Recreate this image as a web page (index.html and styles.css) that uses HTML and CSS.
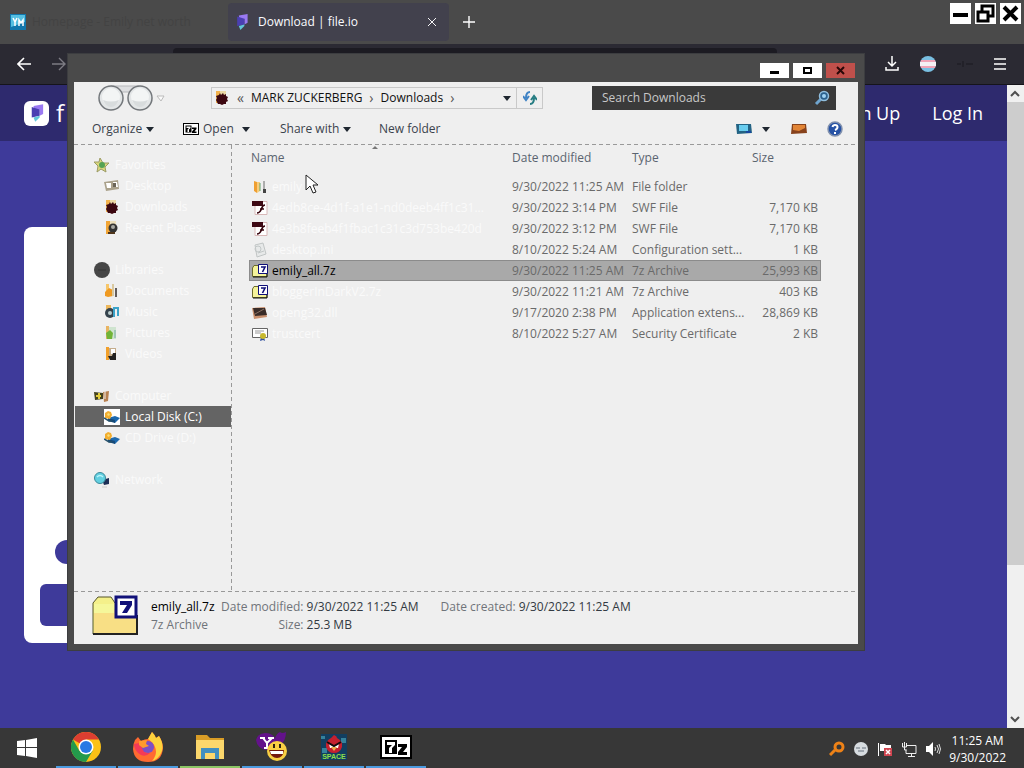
FILE: index.html
```html
<!DOCTYPE html>
<html lang="en">

<head>
  <meta charset="UTF-8">
  <meta name="viewport" content="width=device-width, initial-scale=1.0">
  <link rel="stylesheet" href="styles.css">
  <title>Download | file.io</title>
</head>

<body>
  <!-- shared icons -->
  <svg class="sprite" aria-hidden="true">
    <symbol id="caret" viewBox="0 0 8 5"><path d="M0 0h8L4 5z" fill="#1f2730"/></symbol>
    <symbol id="sevenzip" viewBox="0 0 32 24">
      <path d="M0 0h32v24H0z" fill="#000"/><path d="M2 2h28v20H2z" fill="#fff"/><path d="M5 5h12v14H5z" fill="#000"/>
      <path d="M7 7h8v3l-3 3v5H9v-5l3-3H7z" fill="#fff"/><path d="M18 9h9v3l-4 5h4v3h-9v-3l4-5h-4z" fill="#000"/>
    </symbol>
    <symbol id="archive" viewBox="0 0 46 42">
      <path d="M1 8l5-6h13l4 6h21v31H1z" fill="#f4f08a" stroke="#55552a"/>
      <path d="M2 14h42v24H2z" fill="#f8df85"/><path d="M2 9h20v9H2z" fill="#f5f79a"/>
      <path d="M1 39h44V20" fill="none" stroke="#222" stroke-width="2"/>
      <path d="M24 2h20v20H24z" fill="#fff" stroke="#101078" stroke-width="3"/>
      <path d="M28 6h12v4l-5 8h-5l5-8h-7z" fill="#101078"/>
    </symbol>
    <symbol id="archive-small" viewBox="0 0 16 16">
      <path d="M0.500 5L2 2.500h4L7.500 5H15v8.500H.5z" fill="#f5f39a" stroke="#6c6c2c"/>
      <path d="M1 14h14V9" fill="none" stroke="#111"/>
      <path d="M6.500 1.500h9v9h-9z" fill="#fff" stroke="#101078"/>
      <path d="M9 4h4L10.500 9" fill="none" stroke="#101078" stroke-width="1.6"/>
    </symbol>
    <symbol id="swf" viewBox="0 0 16 16">
      <path d="M3 1.500h12v13H3z" fill="#fff" stroke="#d8b8b8"/><path d="M0 1h11v5H0z" fill="#3d0914"/>
      <path d="M13 5C10 5 10 8 9 10s-2 3-4 3M8 9h4" fill="none" stroke="#35040d" stroke-width="1.6"/>
    </symbol>
    <symbol id="spider" viewBox="0 0 16 16">
      <path d="M2 1h4v12H2z" fill="#f3b34d"/><path d="M6 1h6v8H6z" fill="#ecd9a5"/>
      <path d="M5 5l1-2 1 2 2-2 1 2 2-1v2l2 1-1 2 1 2-2 1v2l-2 0-2 1-2-1-2 0-1-2-1-2 1-2-1-2z" fill="#3c0710"/>
    </symbol>
    <symbol id="disk" viewBox="0 0 16 16">
      <path d="M4 9l7-2 5 2-5 5z" fill="#1c68ad"/><path d="M4 9l7 2v3l-7-2z" fill="#164a79"/>
      <path d="M1 4l3-2 3 1 1 3-2 4-5-1z" fill="#f2ad2f"/><path d="M3 5l2-1 1 2-2 1z" fill="#fbdf75"/>
      <path d="M0 9l5 3h3" fill="none" stroke="#26506a" stroke-width="1.5"/>
    </symbol>
    <symbol id="fileio" viewBox="0 0 16 20">
      <path d="M4 2l11-2v11l-4 2V6L5 8z" fill="#9a79f2"/><path d="M2 3l9 3v7l-9 2z" fill="#4a3fb2"/><path d="M4 15l7-2v2l-5 5z" fill="#62c7da"/>
    </symbol>
  </svg>

  <div class="desktop">
    <div class="browser">
      <div class="tabs">
        <div class="tab">
          <svg class="tab-icon" viewBox="0 0 16 16"><path d="M0 0h16v16H0z" fill="#1277ac"/><path d="M1 1h14v7L1 13z" fill="#55bfe1"/><path d="M3 4l2 4 2-4M5 8v4M9 12V6l2 3 2-3v6" fill="none" stroke="#fff" stroke-width="1.5"/></svg>
          <span class="tab-title">Homepage - Emily net worth</span>
        </div>
        <div class="tab tab-active">
          <svg class="tab-icon"><use href="#fileio"/></svg>
          <span class="tab-title">Download | file.io</span>
          <button class="icon-btn" aria-label="Close tab"><svg width="10" height="10" viewBox="0 0 10 10"><path d="M1 1l8 8M9 1L1 9" stroke="#f5f5f7"/></svg></button>
        </div>
        <button class="icon-btn new-tab" aria-label="New tab"><svg width="12" height="12" viewBox="0 0 12 12"><path d="M6 0v12M0 6h12" stroke="#fff" stroke-width="1.4"/></svg></button>
        <div class="win-buttons">
          <button aria-label="Minimize"><svg viewBox="0 0 21 21"><path d="M3 10h15v4H3z"/></svg></button>
          <button aria-label="Restore"><svg viewBox="0 0 21 21"><path d="M3 9h10v9H3zM7 9V3h11v10h-5" fill="none" stroke="#000" stroke-width="3"/></svg></button>
          <button aria-label="Close"><svg viewBox="0 0 21 21"><path d="M4 4l13 13M17 4L4 17" stroke="#000" stroke-width="4"/></svg></button>
        </div>
      </div>

      <div class="navbar">
        <button class="icon-btn" aria-label="Back"><svg width="14" height="14" viewBox="0 0 14 14"><path d="M14 7H1M7 1L1 7l6 6" fill="none" stroke="#fff" stroke-width="1.6"/></svg></button>
        <button class="icon-btn" aria-label="Forward"><svg width="14" height="14" viewBox="0 0 14 14"><path d="M0 7h13M7 1l6 6-6 6" fill="none" stroke="#7d7c84" stroke-width="1.4"/></svg></button>
        <div class="url-bar"></div>
        <button class="icon-btn" aria-label="Downloads"><svg width="14" height="16" viewBox="0 0 14 16"><path d="M7 0v10M3 6l4 4 4-4M1 11v3h12v-3" fill="none" stroke="#fff" stroke-width="1.5"/></svg></button>
        <button class="icon-btn" aria-label="Profile"><svg width="16" height="16" viewBox="0 0 16 16"><circle cx="8" cy="8" r="8" fill="#79bfe2"/><path d="M1 4h14l1 4-1 4H1L0 8z" fill="#f0a4b8"/><path d="M0 6h16v4H0z" fill="#f4f0f4"/></svg></button>
        <button class="icon-btn" aria-label="Extension"><svg width="16" height="8" viewBox="0 0 16 8"><path d="M0 4h4M6 1v6M9 4h7" stroke="#222129" stroke-width="2"/></svg></button>
        <button class="icon-btn" aria-label="Menu"><svg width="12" height="12" viewBox="0 0 12 12"><path d="M0 1h12M0 6h12M0 11h12" stroke="#fff" stroke-width="1.4"/></svg></button>
      </div>

      <div class="viewport">
        <div class="site">
          <div class="site-header">
            <a href="#" class="brand"><span class="brand-logo"><svg width="14" height="18"><use href="#fileio"/></svg></span>f</a>
            <a href="#" class="site-link">Sign Up</a>
            <a href="#" class="site-link">Log In</a>
          </div>
          <div class="card">
            <span class="card-dot"></span>
            <span class="card-bar"></span>
          </div>
        </div>
        <div class="scrollbar">
          <svg viewBox="0 0 17 17"><path d="M4 11l4-4 4 4" fill="none" stroke="#505050" stroke-width="2"/></svg>
          <div class="thumb"></div>
          <svg viewBox="0 0 17 17"><path d="M4 6l4 4 4-4" fill="none" stroke="#505050" stroke-width="2"/></svg>
        </div>
      </div>
    </div>

    <div class="explorer">
      <div class="titlebar">
        <button aria-label="Minimize"><svg viewBox="0 0 29 15"><path d="M10 8h9v3h-9z"/></svg></button>
        <button aria-label="Maximize"><svg viewBox="0 0 29 15"><path d="M11 5h7v5h-7z" fill="none" stroke="#000" stroke-width="2"/></svg></button>
        <button class="close" aria-label="Close"><svg viewBox="0 0 29 15"><path d="M11 4l7 7M18 4l-7 7" stroke="#2a0808" stroke-width="2"/></svg></button>
      </div>
      <div class="explorer-body">
        <div class="address-row">
          <svg class="back-forward" viewBox="0 0 68 28">
            <path d="M14 2h28v6H14z" fill="#dedfe1" stroke="#b5b7ba"/>
            <circle cx="14" cy="14" r="12" fill="#e3e6e7" stroke="#73777b" stroke-width="1.5"/><circle cx="14" cy="13" r="9" fill="#f3f5f5"/>
            <path d="M6 16q8 3 16 0-3 7-8 7t-8-7" fill="#d8dcdd"/>
            <circle cx="43" cy="14" r="12" fill="#e3e6e7" stroke="#73777b" stroke-width="1.5"/><circle cx="43" cy="13" r="9" fill="#f3f5f5"/>
            <path d="M35 16q8 3 16 0-3 7-8 7t-8-7" fill="#d8dcdd"/>
            <path d="M60 12h7l-3 5z" fill="#fafafa" stroke="#bbb"/>
          </svg>
          <div class="address">
            <svg class="ico"><use href="#spider"/></svg>
            <span class="sep">«</span>
            <a href="#">MARK ZUCKERBERG</a>
            <span class="sep">›</span>
            <a href="#">Downloads</a>
            <span class="sep">›</span>
            <button class="icon-btn history" aria-label="Previous locations"><svg class="caret"><use href="#caret"/></svg></button>
            <button class="icon-btn refresh" aria-label="Refresh"><svg width="14" height="14" viewBox="0 0 14 14"><path d="M7 1Q3 1 3 7M0 5l3 4 3-4" fill="none" stroke="#3f83c5" stroke-width="2"/><path d="M7 13q4 0 4-6M8 9l3-4 3 4" fill="none" stroke="#277d83" stroke-width="2"/></svg></button>
          </div>
          <div class="search">
            <input type="text" placeholder="Search Downloads" aria-label="Search Downloads">
            <svg class="ico" viewBox="0 0 16 16"><path d="M2 14l5-5" stroke="#6fa5cf" stroke-width="3"/><circle cx="10" cy="6" r="4.500" fill="#2b618e" stroke="#91bedd" stroke-width="1.5"/><circle cx="10" cy="6" r="2" fill="#9fd3f4"/></svg>
          </div>
        </div>

        <div class="commands">
          <button class="organize">Organize <svg class="caret"><use href="#caret"/></svg></button>
          <button class="open"><svg width="16" height="12"><use href="#sevenzip"/></svg> Open <svg class="caret"><use href="#caret"/></svg></button>
          <button class="share">Share with <svg class="caret"><use href="#caret"/></svg></button>
          <button>New folder</button>
          <div class="view-tools">
            <button aria-label="Change view"><svg width="16" height="12" viewBox="0 0 16 12"><path d="M0 1h15l1 9-15 1z" fill="#236384"/><path d="M3 2h9v6H3z" fill="#69cdef"/><path d="M10 8h5v2h-5z" fill="#1747a0"/></svg></button>
            <button aria-label="More views"><svg class="caret"><use href="#caret"/></svg></button>
            <button class="preview" aria-label="Preview pane"><svg width="16" height="12" viewBox="0 0 16 12"><path d="M1 1h14l1 9-16 1z" fill="#87421c"/><path d="M2 2h12v3L8 8 2 7z" fill="#e28536"/></svg></button>
            <button aria-label="Help"><svg class="ico" viewBox="0 0 16 16"><circle cx="8" cy="8" r="7" fill="#2652a5" stroke="#8090ad" stroke-width="1.5"/><path d="M5.500 6Q6 4 8 4q2.500 0 2.500 2T8 9M8 11v2" fill="none" stroke="#fff" stroke-width="2"/></svg></button>
          </div>
        </div>

        <div class="panes">
          <div class="sidebar">
            <ul>
              <li class="group"><svg class="ico" viewBox="0 0 16 16"><path d="M6 1l3 5 6 0-4 4 1 5-5-3-4 3 1-6-4-4 5 0z" fill="#d9d77b" stroke="#9c9b65"/><circle cx="8" cy="8" r="3" fill="#55a254"/></svg><a href="#">Favorites</a></li>
              <li><svg class="ico" viewBox="0 0 16 16"><path d="M0 4l14-2 1 9-13 2z" fill="#aaa18b"/><path d="M2 5h5v5H3zM9 4h4l1 5h-4z" fill="#fff"/><path d="M9 5h3v4H9z" fill="#6b6558"/></svg><a href="#">Desktop</a></li>
              <li><svg class="ico"><use href="#spider"/></svg><a href="#">Downloads</a></li>
              <li><svg class="ico" viewBox="0 0 16 16"><path d="M2 1h4v13H2z" fill="#f1a536"/><path d="M6 1h6v6H6z" fill="#eee0bd"/><circle cx="9" cy="8" r="4.500" fill="#333"/><circle cx="9" cy="7" r="2" fill="#a8a8a2"/><path d="M4 12h7v2H4z" fill="#4f351b"/></svg><a href="#">Recent Places</a></li>
            </ul>
            <ul>
              <li class="group"><svg class="ico" viewBox="0 0 16 16"><circle cx="8" cy="8" r="8" fill="#464646"/><path d="M4 8h8" stroke="#343434"/></svg><a href="#">Libraries</a></li>
              <li><svg class="ico" viewBox="0 0 16 16"><path d="M2 1h3v7H2z" fill="#f6c66a"/><path d="M1 9l4-4 4 2 0 6-5 1-3-1z" fill="#ef9a22"/><path d="M8 1h2v12H8z" fill="#dac99f"/><path d="M12 5v9" stroke="#3f3835" stroke-width="1.6"/></svg><a href="#">Documents</a></li>
              <li><svg class="ico" viewBox="0 0 16 16"><path d="M2 1h5v8H2z" fill="#edb75c"/><circle cx="6" cy="9" r="5" fill="#35434d"/><circle cx="6" cy="9" r="2" fill="#bcc"/><path d="M10 13V4h4v8" fill="none" stroke="#3ba3c9" stroke-width="2"/></svg><a href="#">Music</a></li>
              <li><svg class="ico" viewBox="0 0 16 16"><path d="M2 1h3v13H2z" fill="#e9b463"/><path d="M5 2h7v12H5z" fill="#cfe4cf"/><path d="M2 8l4-3 3 3-1 6H3z" fill="#72b438"/><path d="M11 5v8" stroke="#77a79f"/></svg><a href="#">Pictures</a></li>
              <li><svg class="ico" viewBox="0 0 16 16"><path d="M2 1h3v13H2z" fill="#f2a02a"/><path d="M5 2h7v10H5z" fill="#c5ad8c"/><path d="M7 3h4v5H7z" fill="#fff"/><path d="M4 10h4l1-3h3v7H6z" fill="#22201f"/></svg><a href="#">Videos</a></li>
            </ul>
            <ul>
              <li class="group"><svg class="ico" viewBox="0 0 16 16"><path d="M0 4l9 1v6l-8 1z" fill="#44421e"/><path d="M2 8h5M5 5v6" stroke="#e4cd39" stroke-width="2"/><path d="M9 4l6-1-1 10-4 1z" fill="#b88151"/><path d="M11 3v8" stroke="#eee" stroke-width="1"/></svg><a href="#">Computer</a></li>
              <li class="current"><svg class="ico"><use href="#disk"/></svg><a href="#">Local Disk (C:)</a></li>
              <li><svg class="ico"><use href="#disk"/></svg><a href="#">CD Drive (D:)</a></li>
            </ul>
            <ul>
              <li class="group"><svg class="ico" viewBox="0 0 16 16"><path d="M8 8l7-2v6l-5 1z" fill="#1d2e55"/><circle cx="6" cy="6" r="5.500" fill="#62cfe0" stroke="#3b899a"/><path d="M3 5q3-3 6 0" fill="none" stroke="#b9f4fa" stroke-width="1.5"/><path d="M8 15h5" stroke="#ccc"/></svg><a href="#">Network</a></li>
            </ul>
          </div>

          <div class="files">
            <table>
              <thead>
                <tr>
                  <th class="name">Name<svg class="sort" viewBox="0 0 6 3"><path d="M0 3l3-3 3 3z" fill="#777"/></svg></th>
                  <th class="date">Date modified</th>
                  <th class="type">Type</th>
                  <th class="size">Size</th>
                </tr>
              </thead>
              <tbody>
                <tr>
                  <td class="name"><svg class="ico" viewBox="0 0 16 16"><path d="M2 2l3 1v11l-3-2z" fill="#ef9f31"/><path d="M5 3h3v9l-3 2z" fill="#f7cd7e"/><path d="M8 4v8" stroke="#63a46b"/><path d="M12 2v8" stroke="#6a6a6a"/><path d="M11 10h3v4h-3z" fill="#444"/></svg>emily</td>
                  <td>9/30/2022 11:25 AM</td><td>File folder</td><td class="num"></td>
                </tr>
                <tr>
                  <td class="name"><svg class="ico"><use href="#swf"/></svg>4edb8ce-4d1f-a1e1-nd0deeb4ff1c31...</td>
                  <td>9/30/2022 3:14 PM</td><td>SWF File</td><td class="num">7,170 KB</td>
                </tr>
                <tr>
                  <td class="name"><svg class="ico"><use href="#swf"/></svg>4e3b8feeb4f1fbac1c31c3d753be420d</td>
                  <td>9/30/2022 3:12 PM</td><td>SWF File</td><td class="num">7,170 KB</td>
                </tr>
                <tr>
                  <td class="name"><svg class="ico" viewBox="0 0 16 16"><path d="M3 3l8-2 3 11-9 3z" fill="#e7e9e9" stroke="#c1c5c5"/><circle cx="6" cy="7" r="3" fill="none" stroke="#c2c7c7"/><path d="M6 11l6-2" stroke="#c2c7c7"/></svg>desktop.ini</td>
                  <td>8/10/2022 5:24 AM</td><td>Configuration sett...</td><td class="num">1 KB</td>
                </tr>
                <tr class="selected">
                  <td class="name"><svg class="ico"><use href="#archive-small"/></svg>emily_all.7z</td>
                  <td>9/30/2022 11:25 AM</td><td>7z Archive</td><td class="num">25,993 KB</td>
                </tr>
                <tr>
                  <td class="name"><svg class="ico"><use href="#archive-small"/></svg>bloggerInDarkV2.7z</td>
                  <td>9/30/2022 11:21 AM</td><td>7z Archive</td><td class="num">403 KB</td>
                </tr>
                <tr>
                  <td class="name"><svg class="ico" viewBox="0 0 16 16"><path d="M0 3l13-1 2 10-13 2z" fill="#c9906e"/><path d="M1 3l12 0 2 7L3 11z" fill="#392c28"/><path d="M3 9l9-5" stroke="#8b7264"/></svg>openg32.dll</td>
                  <td>9/17/2020 2:38 PM</td><td>Application extens...</td><td class="num">28,869 KB</td>
                </tr>
                <tr>
                  <td class="name"><svg class="ico" viewBox="0 0 16 16"><path d="M.5 2.500h15v9H.5z" fill="#fff" stroke="#666"/><path d="M3 5h9M3 7h6" stroke="#999"/><path d="M9 11l-1 4 3-1 2 1-1-4z" fill="#3151a0"/><circle cx="11" cy="10" r="3" fill="#c7b82d"/></svg>trustcert</td>
                  <td>8/10/2022 5:27 AM</td><td>Security Certificate</td><td class="num">2 KB</td>
                </tr>
              </tbody>
            </table>
          </div>
        </div>

        <div class="details">
          <svg class="details-icon"><use href="#archive"/></svg>
          <div class="details-name">
            <strong>emily_all.7z</strong>
            <span>7z Archive</span>
          </div>
          <dl>
            <dt>Date modified:</dt><dd>9/30/2022 11:25 AM</dd>
            <dt>Size:</dt><dd>25.3 MB</dd>
          </dl>
          <dl>
            <dt>Date created:</dt><dd>9/30/2022 11:25 AM</dd>
          </dl>
        </div>
      </div>
    </div>

    <div class="taskbar">
      <button class="start" aria-label="Start"><svg width="20" height="20" viewBox="0 0 20 20"><path d="M0 3l8-1v7H0zM9 2l11-2v9H9zM0 10h8v8l-8-1zM9 10h11v10L9 18z" fill="#fff"/></svg></button>
      <button class="task" aria-label="Chrome"><svg width="30" height="30" viewBox="0 0 30 30"><circle cx="15" cy="15" r="15" fill="#fbc116"/><path d="M15 15L2 7.500A15 15 0 0 1 28 7.500H15z" fill="#dd3e31"/><path d="M2 7.500A15 15 0 0 0 15 30l6.500-11L15 15 8.500 19z" fill="#249a4c"/><circle cx="15" cy="15" r="7.500" fill="#fff"/><circle cx="15" cy="15" r="6" fill="#2879e4"/></svg></button>
      <button class="task" aria-label="Firefox"><svg width="30" height="30" viewBox="0 0 30 30"><path d="M2 8l3-3 3 4q4-2 7-2l4-7q3 3 4 6l3-2q4 6 4 12-1 14-15 14T0 17q0-5 2-9z" fill="#ff6a31"/><path d="M19 0q3 3 4 6l3-2q5 8 3 15-3 8-10 10 6-7 3-14-2-5-7-8z" fill="#fdd33d"/><path d="M1 12q8-2 9 2 0 8 7 7-4 4-9 2Q1 19 1 12z" fill="#f43a58"/><circle cx="15" cy="15" r="6" fill="#7b50c6"/><path d="M6 9l8-1-1 4 3 2-6 2-4-3z" fill="#ff9a2d"/></svg></button>
      <button class="task task-open" aria-label="File Explorer"><svg width="28" height="24" viewBox="0 0 28 24"><path d="M0 0h11l3 3h14v8H0z" fill="#d99d26"/><path d="M0 5h28v19H0z" fill="#fbd76c"/><path d="M5 24V13h18v11h-4v-6H9v6z" fill="#408fc0"/></svg></button>
      <button class="task" aria-label="Messenger"><svg width="32" height="30" viewBox="0 0 32 30"><path d="M0 8q1-6 9-7 7 0 10 5 2-5 5-6 2 2 6 0 0 9-6 13-6 5-14 5Q1 16 0 8z" fill="#63128b"/><path d="M4 6h5M12 6h6M7 6l4 5 5-5M11 11v5M8 16h6" fill="none" stroke="#fff" stroke-width="2"/><circle cx="21" cy="19" r="10" fill="#f8cf43"/><path d="M18 12v4M24 12v4" stroke="#2b2111" stroke-width="2"/><path d="M13 18h15q-1 8-7 8t-8-8z" fill="#73180e"/><path d="M14 19h13v3H15z" fill="#fff"/></svg></button>
      <button class="task" aria-label="Angry Birds Space"><svg width="26" height="26" viewBox="0 0 26 26"><path d="M0 0h26v26H0z" fill="#123e60"/><path d="M0 2h4v3H0zM20 4h5v5h-5zM1 14h5v5H1z" fill="#35829c"/><path d="M13 1q3 1 3 3 6 3 5 9-2 6-8 6t-8-6q-1-6 5-9z" fill="#c4202f"/><path d="M8 10l4 2h2l4-2-1 4H9z" fill="#fff"/><path d="M6 8l7 4 7-4" fill="none" stroke="#130b0e" stroke-width="2"/><path d="M10 13h6l-3 4z" fill="#edb04a"/><text x="13" y="25" text-anchor="middle" class="space-text">SPACE</text></svg></button>
      <button class="task" aria-label="7-Zip"><svg width="32" height="24"><use href="#sevenzip"/></svg></button>
      <div class="tray">
        <svg class="ico" viewBox="0 0 16 16"><path d="M1 14l5-5" stroke="#ee8217" stroke-width="3"/><circle cx="10" cy="6" r="4" fill="none" stroke="#ee8217" stroke-width="3"/></svg>
        <svg class="ico" viewBox="0 0 16 16"><circle cx="8" cy="8" r="7" fill="#d7dce0"/><path d="M3 7h4M9 7h4M5 10h6" stroke="#66717c"/></svg>
        <svg class="ico" viewBox="0 0 16 16"><path d="M1.500 2v13" stroke="#fff"/><path d="M3 3h5l1 1h5v6H3z" fill="#fff"/><path d="M7 7h8v8H7z" fill="#d04550"/><path d="M9 9l4 4M13 9l-4 4" stroke="#fff" stroke-width="1.5"/></svg>
        <svg class="ico" viewBox="0 0 16 16"><path d="M6 4.500h9v8H5v-4M7 15.500h7M10.500 12v3M1.500 2v4h4V2M3.500 1v8h2" fill="none" stroke="#eee"/></svg>
        <svg class="ico" viewBox="0 0 16 16"><path d="M1 5h3l4-4v14l-4-4H1z" fill="#fff"/><path d="M10 6q1 2 0 4M12 4q3 4 0 8M14 3q3 5 0 10" fill="none" stroke="#ddd"/></svg>
        <div class="clock"><time>11:25 AM</time><time>9/30/2022</time></div>
      </div>
    </div>

    <svg class="cursor" viewBox="0 0 13 20"><path d="M1 1v15l4-4 3 7 3-1-3-7h5z" fill="#fff" stroke="#222"/></svg>
  </div>
</body>

</html>
```
FILE: styles.css
```css
:root {
  --frame: #4a4a4a;
  --pane: #efefef;
  --ghost: #fafafa;
  --page: #3e3a9a;
  --row: 21px;
}

* {
  box-sizing: border-box;
}

body {
  margin: 0;
  font-family: "Open Sans", "Noto Sans", sans-serif;
  font-size: 12px;
  line-height: 18px;
  color: #4c5158;
}

button {
  display: flex;
  align-items: center;
  padding: 0;
  border: 0;
  background: none;
  font: inherit;
  color: inherit;
}

a {
  color: inherit;
  text-decoration: none;
}

svg {
  flex: none;
}

.sprite {
  position: absolute;
  width: 0;
  height: 0;
}

.ico {
  width: 16px;
  height: 16px;
}

.caret {
  width: 8px;
  height: 5px;
}

.icon-btn {
  justify-content: center;
}

.desktop {
  position: relative;
  display: flex;
  flex-direction: column;
  height: 100vh;
  overflow: hidden;
}

.browser {
  flex: 1;
  display: flex;
  flex-direction: column;
  min-height: 0;
}

/* browser tabs */
.tabs {
  display: flex;
  align-items: center;
  height: 44px;
  background-color: var(--frame);
}

.tab {
  display: flex;
  align-items: center;
  gap: 6px;
  width: 228px;
  height: 38px;
  padding: 0 12px 0 10px;
  color: #434343;
}

.tab-active {
  width: 221px;
  gap: 8px;
  padding-left: 6px;
  background-color: #42414d;
  border-radius: 4px;
  color: #fbfbfe;
}

.tab-title {
  flex: 1;
}

.tab-icon {
  width: 16px;
  height: 16px;
}

.new-tab {
  width: 40px;
  height: 38px;
}

.win-buttons {
  display: flex;
  align-self: flex-start;
  gap: 4px;
  margin-left: auto;
  padding: 3px;
}

.win-buttons button {
  width: 21px;
  height: 21px;
  background-color: #fff;
}

.navbar {
  display: flex;
  align-items: center;
  gap: 21px;
  height: 41px;
  padding: 0 18px 0 17px;
  background-color: #2b2a33;
  border-bottom: 1px solid #15141a;
}

.url-bar {
  align-self: stretch;
  width: 604px;
  margin: 4px auto 4px 86px;
  background-color: #1c1b22;
  border-radius: 4px;
}

.viewport {
  flex: 1;
  display: flex;
  min-height: 0;
}

.site {
  flex: 1;
  background-color: var(--page);
}

.site-header {
  display: flex;
  align-items: center;
  gap: 32px;
  height: 56px;
  padding: 0 24px;
  background-color: #2e2a6e;
  font-size: 18px;
  color: #fff;
}

.brand {
  display: flex;
  align-items: center;
  gap: 7px;
  margin-right: auto;
  font-size: 24px;
}

.brand-logo {
  display: flex;
  align-items: center;
  justify-content: center;
  width: 25px;
  height: 25px;
  background-color: #fff;
  border-radius: 6px;
}

.card {
  display: flex;
  flex-direction: column;
  justify-content: flex-end;
  gap: 20px;
  width: 60%;
  height: 416px;
  margin: 86px 24px 0;
  padding: 17px 16px;
  background-color: #fff;
  border-radius: 8px;
}

.card-dot {
  width: 24px;
  height: 24px;
  margin-left: 15px;
  background-color: var(--page);
  border-radius: 50%;
}

.card-bar {
  height: 42px;
  background-color: var(--page);
  border-radius: 6px;
}

.scrollbar {
  display: flex;
  flex-direction: column;
  width: 17px;
  background-color: #f0f0f0;
}

.thumb {
  flex: none;
  height: 72%;
  margin-bottom: auto;
  background-color: #cdcdcd;
}

/* explorer window */
.explorer {
  position: absolute;
  top: 53px;
  right: 159px;
  bottom: 117px;
  left: 67px;
  display: flex;
  flex-direction: column;
  padding: 0 6px 6px;
  background-color: var(--frame);
  border: 1px solid #3c3d40;
}

.titlebar {
  display: flex;
  justify-content: flex-end;
  gap: 4px;
  height: 28px;
  padding: 9px 3px 0;
}

.titlebar button {
  width: 29px;
  height: 15px;
  background-color: #fff;
}

.titlebar .close {
  background-color: #c0504b;
}

.explorer-body {
  flex: 1;
  display: flex;
  flex-direction: column;
  min-height: 0;
  background-color: var(--pane);
}

.address-row {
  display: flex;
  align-items: center;
  height: 32px;
  padding: 0 22px 0 23px;
}

.back-forward {
  width: 68px;
  height: 28px;
  margin-right: 46px;
}

.address {
  display: flex;
  align-items: center;
  gap: 7px;
  flex: 1;
  height: 22px;
  padding-left: 2px;
  border: 1px solid #c9c9c9;
  color: #111;
}

.address .sep {
  color: #555;
  font-size: 14px;
}

.history {
  width: 18px;
  height: 20px;
  margin-left: auto;
}

.refresh {
  width: 26px;
  height: 20px;
  margin-left: -7px;
  border-left: 1px solid #c9c9c9;
}

.search {
  display: flex;
  align-items: center;
  width: 244px;
  height: 24px;
  margin-left: 49px;
  padding: 0 6px 0 10px;
  background-color: #3a3a3a;
}

.search input {
  flex: 1;
  min-width: 0;
  padding: 0;
  border: 0;
  outline: 0;
  background: none;
  font: inherit;
  color: #c8c8c8;
}

.search input::placeholder {
  color: #c8c8c8;
}

.commands {
  display: flex;
  align-items: center;
  height: 30px;
  padding: 0 15px 0 18px;
  color: #3a424c;
}

.commands > button {
  gap: 4px;
}

.commands .organize {
  width: 91px;
}

.commands .open {
  width: 97px;
}

.commands .open .caret {
  margin-left: 4px;
}

.commands .share {
  width: 99px;
}

.view-tools {
  display: flex;
  gap: 10px;
  margin-left: auto;
}

.view-tools .preview {
  margin: 0 10px 0 11px;
}

/* dashed separators */
.panes,
.details {
  background: repeating-linear-gradient(90deg, #999 0 4px, transparent 4px 7px) top / 100% 1px no-repeat;
}

.panes {
  flex: 1;
  display: flex;
  min-height: 0;
  padding-top: 1px;
}

.sidebar {
  width: 158px;
  padding: 9px 1px 0 0;
  background: repeating-linear-gradient(#999 0 4px, transparent 4px 7px) right / 1px 100% no-repeat;
}

.sidebar ul {
  margin: 0 0 var(--row);
  padding: 0;
  list-style: none;
}

.sidebar li {
  display: flex;
  align-items: center;
  gap: 5px;
  height: var(--row);
  margin-left: 1px;
  padding-left: 29px;
  color: var(--ghost);
}

.sidebar .group {
  padding-left: 19px;
}

.sidebar .current {
  background-color: #646464;
  color: #fff;
}

.current .ico {
  background-color: #fff;
}

/* file list */
.files {
  flex: 1;
  padding: 0 37px 0 17px;
}

.files table {
  width: 100%;
  table-layout: fixed;
  border-collapse: collapse;
}

.files th {
  position: relative;
  height: 31px;
  padding: 0 0 5px 6px;
  font-weight: normal;
  text-align: left;
  color: #5a6470;
}

.files th.name {
  padding-left: 2px;
}

.files .date,
.files .type {
  width: 120px;
}

.files .size {
  width: 75px;
}

.sort {
  position: absolute;
  top: 1px;
  left: 123px;
  width: 6px;
  height: 3px;
}

.files td {
  height: var(--row);
  padding: 0 0 0 6px;
  overflow: hidden;
  white-space: nowrap;
  color: #6a6a6a;
}

.files td.name {
  padding: 0 6px 0 3px;
  color: var(--ghost);
}

.files td.num {
  padding-right: 3px;
  text-align: right;
}

.files td .ico {
  margin-right: 4px;
  vertical-align: middle;
}

.files .selected {
  background-color: #a9a9a9;
  outline: 1px solid #8b8b8b;
  outline-offset: -1px;
}

.files .selected .name {
  color: #000;
}

/* details pane */
.details {
  display: flex;
  height: 53px;
  padding: 4px 18px;
}

.details-icon {
  width: 46px;
  height: 42px;
  margin-right: 13px;
}

.details-name {
  display: flex;
  flex-direction: column;
  width: 70px;
  padding-top: 3px;
  white-space: nowrap;
  color: #6f747a;
}

.details-name strong {
  font-weight: normal;
  color: #000;
}

.details dl {
  display: grid;
  grid-template-columns: auto auto;
  align-content: start;
  gap: 0 3px;
  margin: 0 22px 0 0;
  padding-top: 3px;
}

.details dt {
  text-align: right;
  color: #6f747a;
}

.details dd {
  margin: 0;
  color: #333a42;
}

/* taskbar */
.taskbar {
  display: flex;
  gap: 2px;
  height: 40px;
  background-color: #373737;
  color: #fff;
}

.taskbar button {
  justify-content: center;
}

.start {
  width: 54px;
}

.task {
  width: 60px;
  border-bottom: 2px solid #4b9be0;
}

.task-open {
  border-bottom-color: #8cc665;
}

.space-text {
  font-family: "Liberation Sans", sans-serif;
  font-size: 7px;
  font-weight: bold;
  fill: #8ee04a;
}

.tray {
  display: flex;
  align-items: center;
  gap: 8px;
  margin-left: auto;
  padding: 2px 18px 0 0;
}

.clock {
  display: flex;
  flex-direction: column;
  align-items: center;
  line-height: 17px;
}

.cursor {
  position: absolute;
  top: 174px;
  left: 305px;
  width: 13px;
  height: 20px;
}
```
